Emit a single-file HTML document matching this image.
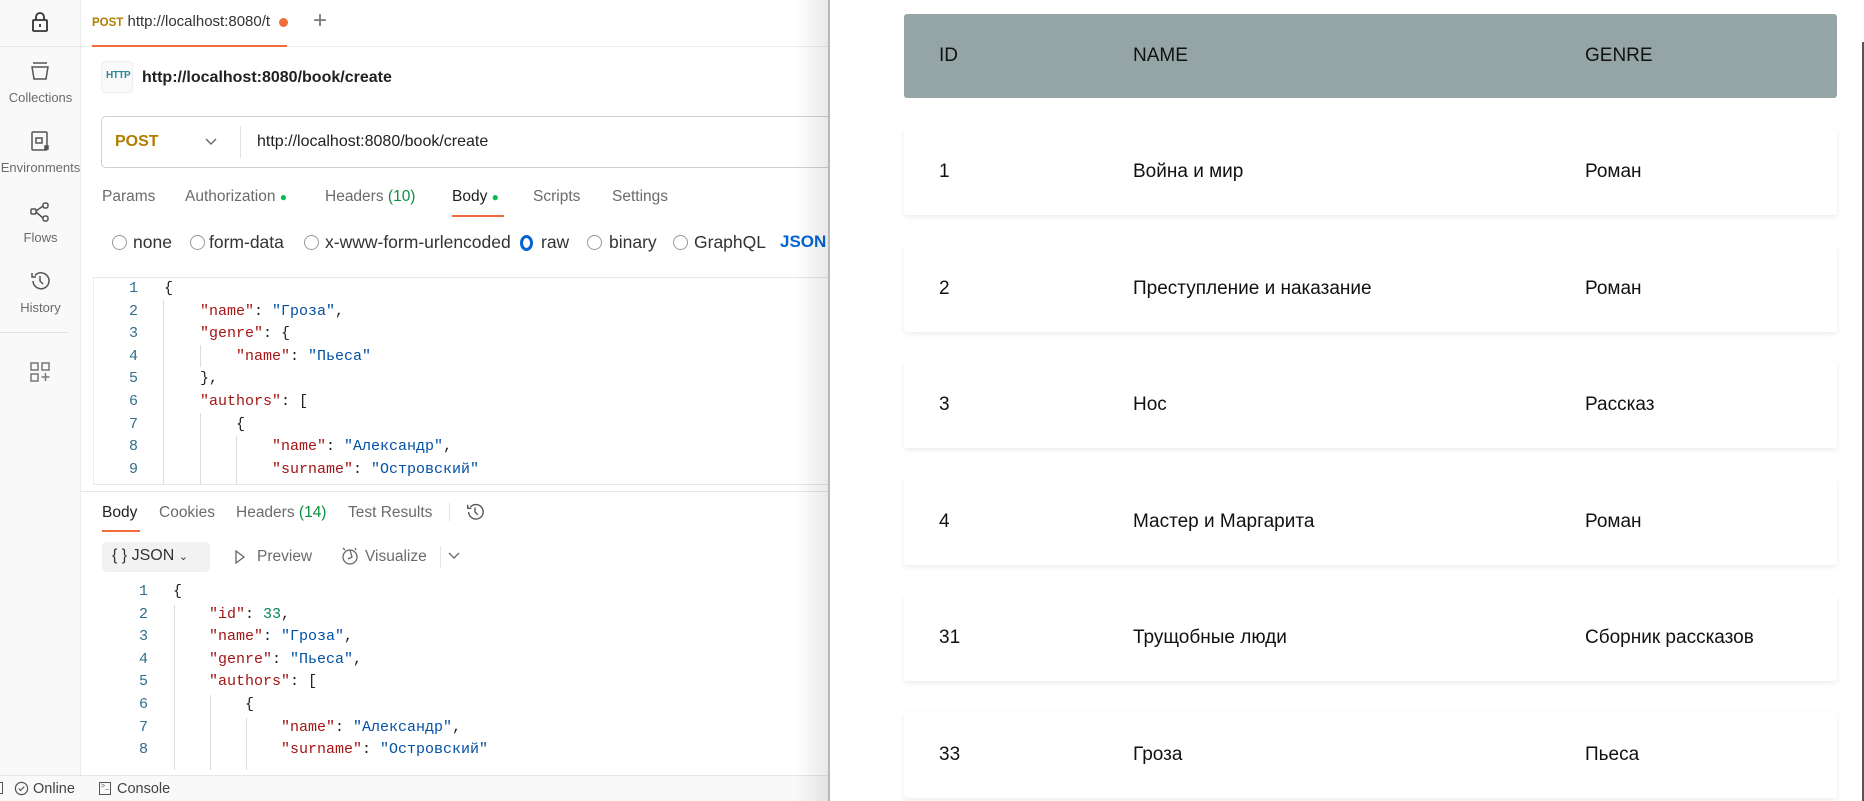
<!DOCTYPE html>
<html><head><meta charset="utf-8"><style>
*{margin:0;padding:0;box-sizing:border-box}
body{width:1864px;height:801px;overflow:hidden;background:#fff;font-family:"Liberation Sans","DejaVu Sans",sans-serif;position:relative;color:#212121}
.a{position:absolute;white-space:nowrap}
#left{position:absolute;left:0;top:0;width:830px;height:801px;background:#fff;overflow:hidden}
#side{position:absolute;left:0;top:0;width:81px;height:775px;background:#f9f9f9;border-right:1px solid #ececec}
.sl{position:absolute;width:81px;text-align:center;font-size:13px;color:#6b6b6b}
.ui{font-size:15.5px;color:#6b6b6b}
.code{font-family:"Liberation Mono",monospace;font-size:15px;line-height:22.6px}
.ln{position:absolute;width:30px;text-align:right;color:#2f6f8f}
.k{color:#a31515}.s{color:#0451a5}.n{color:#098658}
.guide{position:absolute;width:1px;background:#ddd}
.row{position:absolute;left:904px;width:933px;height:86px;background:#fff;border-radius:3px;box-shadow:0 2px 6px rgba(0,0,0,.08)}
.row span{position:absolute;top:32px;font-size:19px;color:#111}
.rc{position:absolute;top:235px;width:15px;height:15px;border:1px solid #999;border-radius:50%}
.rt{position:absolute;top:232px;font-size:17.5px;color:#333;white-space:nowrap}
</style></head><body>
<div id="left">
 <div id="side">
  <svg class="a" style="left:30px;top:11px" width="20" height="22" viewBox="0 0 20 22" fill="none" stroke="#333" stroke-width="1.8"><rect x="3" y="9" width="14" height="11" rx="1"/><path d="M6 9V6a4 4 0 0 1 8 0v3M10 13v3"/></svg>
  <div class="a" style="left:0;top:46px;width:81px;border-top:1px solid #e6e6e6"></div>
  <svg class="a" style="left:29px;top:60px" width="22" height="22" viewBox="0 0 22 22" fill="none" stroke="#555" stroke-width="1.5"><path d="M4 3h14M3 7h16l-2 12H5z"/></svg>
  <div class="sl" style="top:90px">Collections</div>
  <svg class="a" style="left:29px;top:130px" width="22" height="22" viewBox="0 0 22 22" fill="none" stroke="#555" stroke-width="1.5"><rect x="3" y="2" width="15" height="18" rx="1"/><rect x="7" y="8" width="6" height="5"/><rect x="16" y="16" width="3" height="3" fill="#555"/></svg>
  <div class="sl" style="top:160px;left:-12px;width:105px">Environments</div>
  <svg class="a" style="left:29px;top:201px" width="22" height="22" viewBox="0 0 22 22" fill="none" stroke="#555" stroke-width="1.5"><rect x="2" y="8" width="5" height="5" rx="1"/><rect x="14" y="2" width="5" height="5" rx="2"/><rect x="14" y="15" width="5" height="5" rx="2"/><path d="M7 10l7-5M7 11l7 6"/></svg>
  <div class="sl" style="top:230px">Flows</div>
  <svg class="a" style="left:29px;top:270px" width="22" height="22" viewBox="0 0 22 22" fill="none" stroke="#555" stroke-width="1.5"><path d="M4 11a8 8 0 1 0 2-5.5M3 3v4h4M11 6v5l3 3"/></svg>
  <div class="sl" style="top:300px">History</div>
  <div class="a" style="left:0;top:332px;width:68px;border-top:1px solid #e0e0e0"></div>
  <svg class="a" style="left:29px;top:361px" width="22" height="22" viewBox="0 0 22 22" fill="none" stroke="#777" stroke-width="1.5"><rect x="2" y="2" width="7" height="7"/><rect x="13" y="2" width="7" height="7"/><rect x="2" y="13" width="7" height="7"/><path d="M16.5 12v8M12.5 16h8"/></svg>
 </div>
 <div class="a" style="left:81px;top:46px;width:760px;border-top:1px solid #ececec"></div>
 <div class="a" style="left:92px;top:13px;font-size:15px"><span style="color:#b07d00;font-size:11.5px;font-weight:bold">POST</span> <span style="color:#333">http://localhost:8080/t</span></div>
 <div class="a" style="left:279px;top:18px;width:9px;height:9px;border-radius:50%;background:#f26b3a"></div>
 <div class="a" style="left:313px;top:7px;font-size:24px;color:#777;font-weight:300">+</div>
 <div class="a" style="left:92px;top:45px;width:195px;height:2px;background:#f26b3a"></div>
 <div class="a" style="left:101px;top:61px;width:32px;height:32px;border:1px solid #eee;border-radius:4px;background:#fafafa"></div>
 <div class="a" style="left:106px;top:70px;font-size:10px;color:#2a8a9a;font-weight:bold;letter-spacing:-0.5px">HTTP</div>
 <div class="a" style="left:142px;top:69px;font-size:16px;font-weight:bold;color:#212121">http://localhost:8080/book/create</div>
 <div class="a" style="left:101px;top:116px;width:800px;height:52px;border:1px solid #d0d0d0;border-radius:5px"></div>
 <div class="a" style="left:115px;top:133px;font-size:16px;font-weight:bold;color:#b07d00">POST</div>
 <svg class="a" style="left:205px;top:138px" width="12" height="8" viewBox="0 0 12 8" fill="none" stroke="#666" stroke-width="1.4"><path d="M1 1l5 5 5-5"/></svg>
 <div class="a" style="left:240px;top:126px;width:1px;height:32px;background:#e2e2e2"></div>
 <div class="a" style="left:257px;top:133px;font-size:16px;color:#212121">http://localhost:8080/book/create</div>
 <div class="a ui" style="left:102px;top:188px">Params</div>
 <div class="a ui" style="left:185px;top:188px">Authorization <span style="color:#0cbb52;font-size:12px">●</span></div>
 <div class="a ui" style="left:325px;top:188px">Headers <span style="color:#0a8f3d">(10)</span></div>
 <div class="a ui" style="left:452px;top:188px;color:#212121">Body <span style="color:#0cbb52;font-size:12px">●</span></div>
 <div class="a" style="left:452px;top:215px;width:52px;height:2px;background:#f26b3a"></div>
 <div class="a ui" style="left:533px;top:188px">Scripts</div>
 <div class="a ui" style="left:612px;top:188px">Settings</div>
 <div class="rc" style="left:112px"></div><div class="rt" style="left:133px">none</div>
 <div class="rc" style="left:190px"></div><div class="rt" style="left:209px">form-data</div>
 <div class="rc" style="left:304px"></div><div class="rt" style="left:325px">x-www-form-urlencoded</div>
 <div class="rc" style="left:520px;border:3.5px solid #0265d2;width:13px;height:16px"></div><div class="rt" style="left:541px">raw</div>
 <div class="rc" style="left:587px"></div><div class="rt" style="left:609px">binary</div>
 <div class="rc" style="left:673px"></div><div class="rt" style="left:694px">GraphQL</div>
 <div class="rt" style="left:780px;font-weight:bold;color:#0265d2;font-size:17px">JSON</div>
 <div class="a" style="left:93px;top:277px;width:760px;height:208px;border-top:1px solid #e6e6e6;border-bottom:1px solid #e6e6e6;border-left:1px solid #eee"></div>
 <div class="guide" style="left:163px;top:300px;height:184px"></div>
 <div class="guide" style="left:200px;top:345px;height:22px"></div>
 <div class="guide" style="left:200px;top:413px;height:71px"></div>
 <div class="guide" style="left:236px;top:436px;height:48px"></div>
 <div class="a code" style="left:0;top:278px">
  <div style="position:relative;height:22.6px"><span class="ln" style="left:108px">1</span><span class="a" style="left:164px">{</span></div>
  <div style="position:relative;height:22.6px"><span class="ln" style="left:108px">2</span><span class="a" style="left:200px"><span class="k">"name"</span>: <span class="s">"Гроза"</span>,</span></div>
  <div style="position:relative;height:22.6px"><span class="ln" style="left:108px">3</span><span class="a" style="left:200px"><span class="k">"genre"</span>: {</span></div>
  <div style="position:relative;height:22.6px"><span class="ln" style="left:108px">4</span><span class="a" style="left:236px"><span class="k">"name"</span>: <span class="s">"Пьеса"</span></span></div>
  <div style="position:relative;height:22.6px"><span class="ln" style="left:108px">5</span><span class="a" style="left:200px">},</span></div>
  <div style="position:relative;height:22.6px"><span class="ln" style="left:108px">6</span><span class="a" style="left:200px"><span class="k">"authors"</span>: [</span></div>
  <div style="position:relative;height:22.6px"><span class="ln" style="left:108px">7</span><span class="a" style="left:236px">{</span></div>
  <div style="position:relative;height:22.6px"><span class="ln" style="left:108px">8</span><span class="a" style="left:272px"><span class="k">"name"</span>: <span class="s">"Александр"</span>,</span></div>
  <div style="position:relative;height:22.6px"><span class="ln" style="left:108px">9</span><span class="a" style="left:272px"><span class="k">"surname"</span>: <span class="s">"Островский"</span></span></div>
 </div>
 <div class="a" style="left:81px;top:491px;width:760px;border-top:1px solid #e6e6e6"></div>
 <div class="a ui" style="left:102px;top:504px;color:#212121">Body</div>
 <div class="a" style="left:102px;top:530px;width:38px;height:2px;background:#f26b3a"></div>
 <div class="a ui" style="left:159px;top:504px">Cookies</div>
 <div class="a ui" style="left:236px;top:504px">Headers <span style="color:#0a8f3d">(14)</span></div>
 <div class="a ui" style="left:348px;top:504px">Test Results</div>
 <div class="a" style="left:449px;top:503px;width:1px;height:18px;background:#e2e2e2"></div>
 <svg class="a" style="left:465px;top:502px" width="20" height="20" viewBox="0 0 22 22" fill="none" stroke="#555" stroke-width="1.5"><path d="M4 11a8 8 0 1 0 2-5.5M3 3v4h4M11 6v5l3 3"/></svg>
 <div class="a" style="left:102px;top:542px;width:108px;height:30px;background:#f2f2f2;border-radius:4px"></div>
 <div class="a" style="left:112px;top:547px;font-size:16px;color:#333">{ } JSON <span style="font-size:11px">⌄</span></div>
 <svg class="a" style="left:234px;top:549px" width="12" height="16" viewBox="0 0 12 16" fill="none" stroke="#666" stroke-width="1.3"><path d="M2 2l8 6-8 6z"/></svg>
 <div class="a ui" style="left:257px;top:548px">Preview</div>
 <svg class="a" style="left:340px;top:545px" width="20" height="22" viewBox="0 0 20 22" fill="none" stroke="#666" stroke-width="1.3"><circle cx="10" cy="12" r="7"/><path d="M10 5l2 7-4 2M3 3l2 2M15 3l1 2"/></svg>
 <div class="a ui" style="left:365px;top:548px">Visualize</div>
 <div class="a" style="left:440px;top:546px;width:1px;height:22px;background:#e6e6e6"></div>
 <svg class="a" style="left:448px;top:552px" width="12" height="8" viewBox="0 0 12 8" fill="none" stroke="#666" stroke-width="1.3"><path d="M1 1l5 5 5-5"/></svg>
 <div class="guide" style="left:174px;top:605px;height:165px"></div>
 <div class="guide" style="left:210px;top:695px;height:75px"></div>
 <div class="guide" style="left:246px;top:718px;height:52px"></div>
 <div class="a code" style="left:0;top:581px">
  <div style="position:relative;height:22.6px"><span class="ln" style="left:118px">1</span><span class="a" style="left:173px">{</span></div>
  <div style="position:relative;height:22.6px"><span class="ln" style="left:118px">2</span><span class="a" style="left:209px"><span class="k">"id"</span>: <span class="n">33</span>,</span></div>
  <div style="position:relative;height:22.6px"><span class="ln" style="left:118px">3</span><span class="a" style="left:209px"><span class="k">"name"</span>: <span class="s">"Гроза"</span>,</span></div>
  <div style="position:relative;height:22.6px"><span class="ln" style="left:118px">4</span><span class="a" style="left:209px"><span class="k">"genre"</span>: <span class="s">"Пьеса"</span>,</span></div>
  <div style="position:relative;height:22.6px"><span class="ln" style="left:118px">5</span><span class="a" style="left:209px"><span class="k">"authors"</span>: [</span></div>
  <div style="position:relative;height:22.6px"><span class="ln" style="left:118px">6</span><span class="a" style="left:245px">{</span></div>
  <div style="position:relative;height:22.6px"><span class="ln" style="left:118px">7</span><span class="a" style="left:281px"><span class="k">"name"</span>: <span class="s">"Александр"</span>,</span></div>
  <div style="position:relative;height:22.6px"><span class="ln" style="left:118px">8</span><span class="a" style="left:281px"><span class="k">"surname"</span>: <span class="s">"Островский"</span></span></div>
 </div>
 <div class="a" style="left:0;top:775px;width:830px;height:26px;background:#f9f9f9;border-top:1px solid #e6e6e6"></div>
 <div class="a" style="left:-6px;top:782px;width:9px;height:12px;border:1.5px solid #555"></div>
 <svg class="a" style="left:14px;top:781px" width="15" height="15" viewBox="0 0 16 16" fill="none" stroke="#555" stroke-width="1.3"><circle cx="8" cy="8" r="6.5"/><path d="M5 8l2 2 4-4"/></svg>
 <div class="a" style="left:33px;top:781px;font-size:14.5px;color:#444">Online</div>
 <div class="a" style="left:99px;top:782px;width:12px;height:13px;border:1.3px solid #555;font-size:7px;line-height:8px;color:#555;padding-left:1px">&gt;_</div>
 <div class="a" style="left:117px;top:781px;font-size:14.5px;color:#444">Console</div>
 <div class="a" style="left:795px;top:0;width:34px;height:801px;background:linear-gradient(to right,rgba(0,0,0,0),rgba(0,0,0,.09))"></div>
 <div class="a" style="left:828px;top:0;width:2px;height:801px;background:#b8b8b8"></div>
</div>
<div class="a" style="left:904px;top:14px;width:933px;height:84px;background:#95a5a5;border-radius:3px"></div>
<div class="a" style="left:939px;top:45px;font-size:19px;color:#111">ID</div>
<div class="a" style="left:1133px;top:45px;font-size:19px;color:#111">NAME</div>
<div class="a" style="left:1585px;top:45px;font-size:19px;color:#111">GENRE</div>
<div class="row" style="top:129px"><span style="left:35px">1</span><span style="left:229px">Война и мир</span><span style="left:681px">Роман</span></div>
<div class="row" style="top:246px"><span style="left:35px">2</span><span style="left:229px">Преступление и наказание</span><span style="left:681px">Роман</span></div>
<div class="row" style="top:362px"><span style="left:35px">3</span><span style="left:229px">Нос</span><span style="left:681px">Рассказ</span></div>
<div class="row" style="top:479px"><span style="left:35px">4</span><span style="left:229px">Мастер и Маргарита</span><span style="left:681px">Роман</span></div>
<div class="row" style="top:595px"><span style="left:35px">31</span><span style="left:229px">Трущобные люди</span><span style="left:681px">Сборник рассказов</span></div>
<div class="row" style="top:712px"><span style="left:35px">33</span><span style="left:229px">Гроза</span><span style="left:681px">Пьеса</span></div>
<div class="a" style="left:1862px;top:42px;width:2px;height:759px;background:#555"></div>
</body></html>
